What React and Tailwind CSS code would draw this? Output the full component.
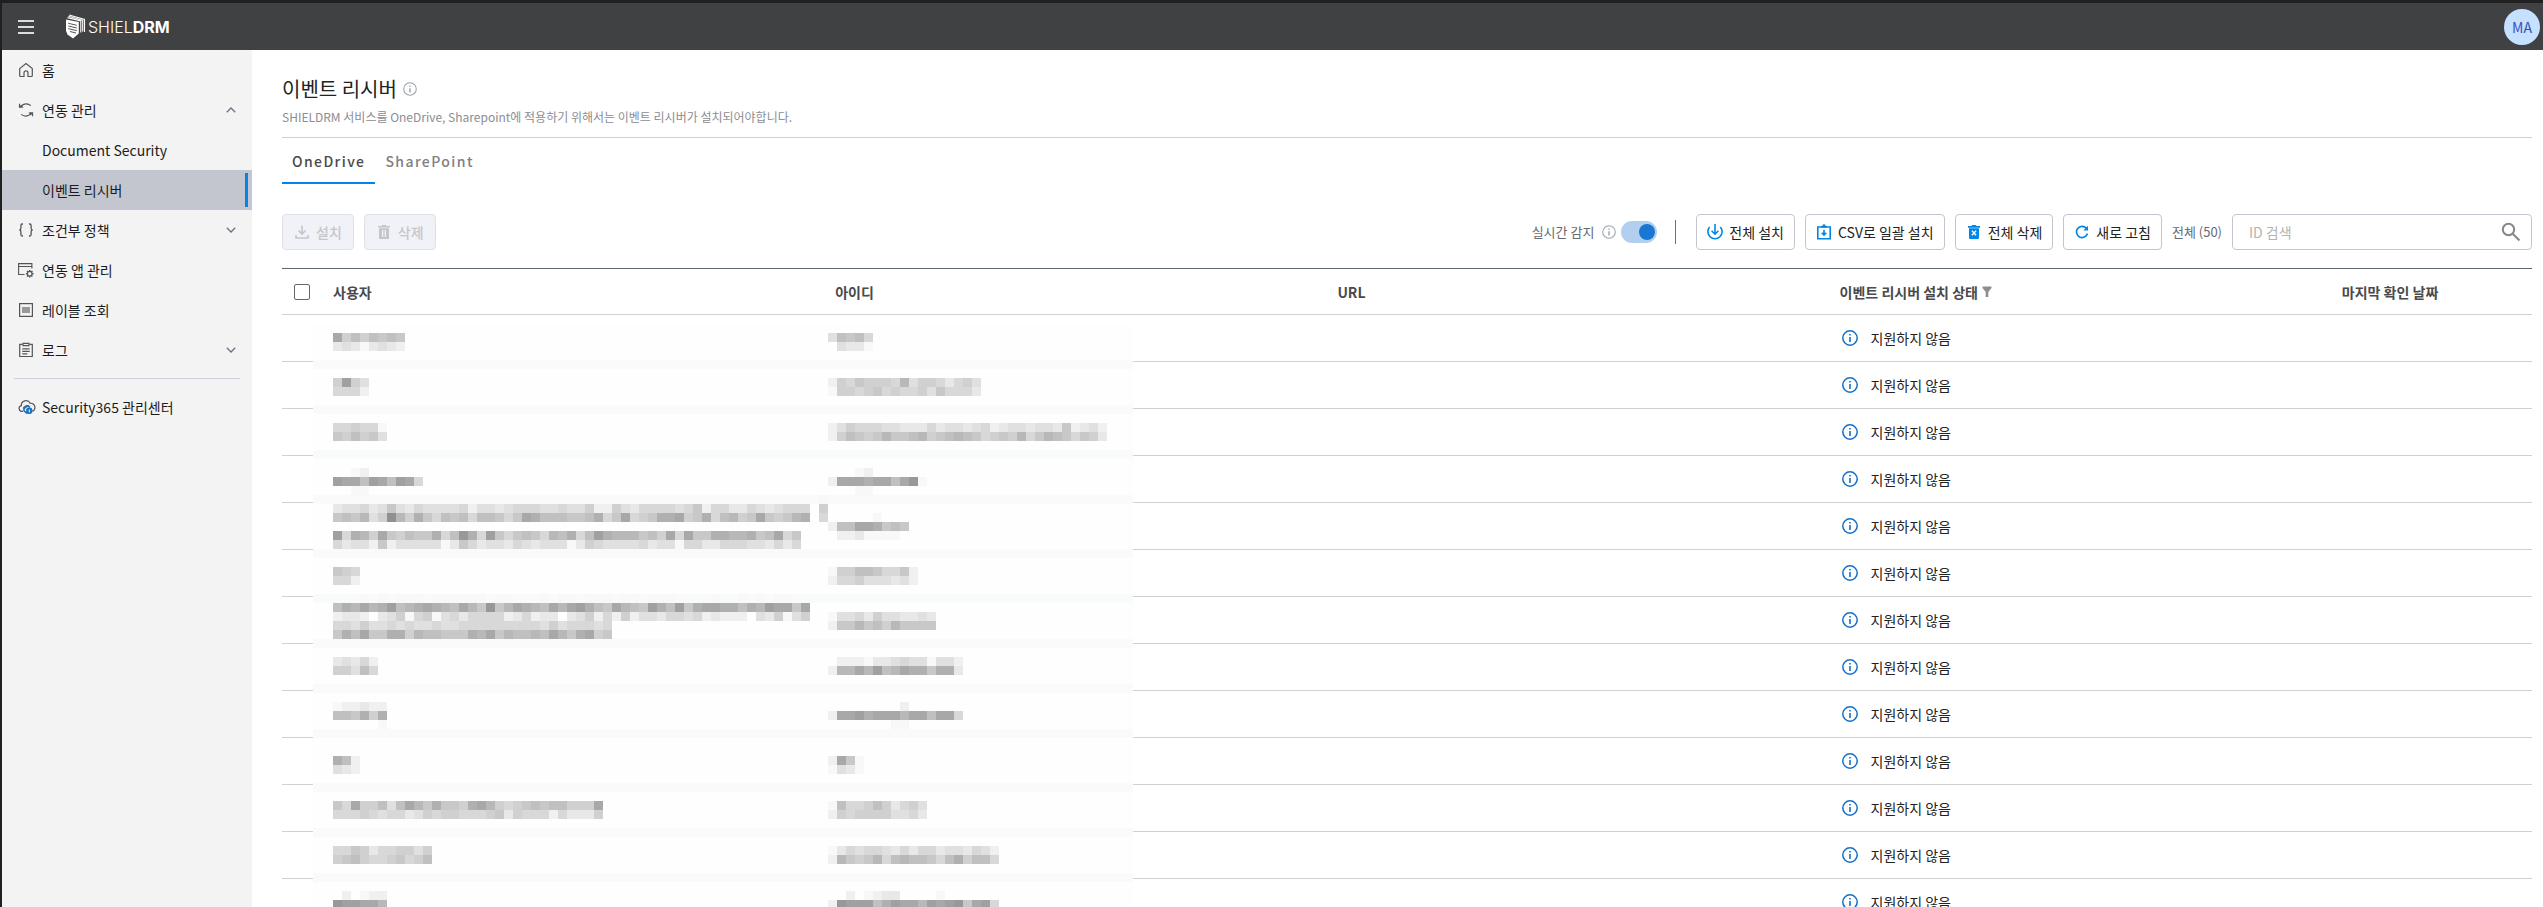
import React, { useState } from 'react';

const svgProps = { fill: 'none', stroke: 'currentColor', 'aria-hidden': true };

const HomeIcon = () => (
    <svg {...svgProps} width="16" height="16" viewBox="0 0 16 16" strokeWidth="1.2">
        <path d="M1.7 6.6 8 1.5l6.3 5.1v6.9a1 1 0 0 1-1 1H10v-3.6a2 2 0 0 0-4 0v3.6H2.7a1 1 0 0 1-1-1z" />
    </svg>
);

const SyncIcon = () => (
    <svg {...svgProps} width="16" height="16" viewBox="0 0 16 16" strokeWidth="1.2">
        <path d="M3 4.3A7 7 0 0 1 12.8 3.6M1.5 1.8v3.4h3.6M1.5 5.1l2.2-1.8" />
        <path d="M13 11.7a7 7 0 0 1-9.8.7M14.5 14.2v-3.4h-3.6M14.5 10.9l-2.2 1.8" />
    </svg>
);

const BracesIcon = () => (
    <svg {...svgProps} width="16" height="16" viewBox="0 0 16 16" strokeWidth="1.3">
        <path d="M5 2H4.2c-1 0-1.3.7-1.3 1.5v2.7c0 1-.5 1.8-1.6 1.8 1.1 0 1.6.8 1.6 1.8v2.7c0 .8.3 1.500 1.300 1.500H5" />
        <path d="M11 2h.8c1 0 1.300.7 1.300 1.500v2.700c0 1 .5 1.800 1.600 1.800-1.100 0-1.600.8-1.600 1.800v2.700c0 .8-.3 1.500-1.300 1.500H11" />
    </svg>
);

const AppSettingIcon = () => (
    <svg {...svgProps} width="16" height="16" viewBox="0 0 16 16" strokeWidth="1.1">
        <path d="M6.5 12.5H.6V1.6h13.3v5M.6 4.5h13.3" />
        <circle cx="11.7" cy="11.7" r="2.3" />
        <path strokeWidth="1.4" d="M11.7 7.900v1.500M11.700 14v1.500M7.900 11.700h1.500M14 11.700h1.500M9 9l1 1M13.400 13.400l1 1M9 14.400l1-1M13.400 10l1-1" />
    </svg>
);

const LabelIcon = () => (
    <svg {...svgProps} width="16" height="16" viewBox="0 0 16 16" strokeWidth="1.2">
        <rect x="1.6" y="1.6" width="12.8" height="12.8" />
        <rect x="4" y="5" width="8" height="6" fill="#999" stroke="none" />
    </svg>
);

const LogIcon = () => (
    <svg {...svgProps} width="16" height="16" viewBox="0 0 16 16" strokeWidth="1.2">
        <path d="M4.5 2.3H1.7v12.2h12.6V2.3h-2.800" />
        <path d="M5 1.3h6v2.400H5zM4.300 6.800h7.400M4.300 9.300h7.400M4.300 11.800h5" />
    </svg>
);

const CloudIcon = () => (
    <svg {...svgProps} width="18" height="16" viewBox="0 0 18 16" strokeWidth="1.2">
        <path d="M5 12.3H3.8A2.9 2.9 0 0 1 3.3 6.6 4.7 4.7 0 0 1 12.2 4.3 4.1 4.1 0 0 1 16.9 8.5c0 2-1 3.300-2.600 3.700" />
        <path d="M5.2 9.5A4.6 4.6 0 0 1 11 6.8" />
        <g stroke="#1673c4">
            <path d="M6.5 12.2a2 2 0 0 1 .4-3.200 3 3 0 0 1 5-.6" strokeWidth="1.6" />
            <circle cx="11.3" cy="11.7" r="2.6" fill="#1673c4" />
            <path d="M6.2 12.2 9.5 14.5" strokeWidth="1.6" />
        </g>
        <path d="M11.3 10.5v2.7" stroke="#fff" strokeWidth="1" />
    </svg>
);

const ChevronIcon = ({ up }) => (
    <svg {...svgProps} width="10" height="6" viewBox="0 0 10 6" strokeWidth="1.3" className="text-gray-500">
        <path d={up ? 'M.8 5.2 5 1l4.200 4.200' : 'M.8.8 5 5 9.200.8'} />
    </svg>
);

const InfoIcon = ({ size, stroke = 1.2, className }) => (
    <svg {...svgProps} width={size} height={size} viewBox="0 0 16 16" className={className}>
        <circle cx="8" cy="8" r="7.2" strokeWidth={stroke} />
        <path d="M8 7v5M8 4v1.5" strokeWidth="1.6" />
    </svg>
);

const DownloadIcon = () => (
    <svg {...svgProps} width="14" height="14" viewBox="0 0 14 14" strokeWidth="1.6">
        <path d="M7 .5v8M3.5 5.5 7 9l3.500-3.500M1 10v3h12v-3" />
    </svg>
);

const TrashIcon = () => (
    <svg width="12" height="14" viewBox="0 0 12 14" fill="currentColor" aria-hidden="true">
        <path d="M0 1h3.5l.8-1h3.400l.8 1H12v1.600H0z" />
        <path fillRule="evenodd" d="M1 3.200h10V14H1zM4 5v7h1.300V5zm2.700 0v7H8V5z" />
    </svg>
);

const InstallAllIcon = () => (
    <svg {...svgProps} width="16" height="16" viewBox="0 0 16 16" strokeWidth="1.6">
        <path d="M8 0v10M4.6 6.8 8 10.2l3.400-3.400" />
        <path d="M2.6 3A7.1 7.1 0 1 0 13.4 3" />
    </svg>
);

const CsvIcon = () => (
    <svg {...svgProps} width="16" height="16" viewBox="0 0 16 16" strokeWidth="1.6">
        <path d="M1.8 3h12.400v11.700H1.800z" />
        <path d="M5 2.7h6M6.500 1.200h3M8 5.800v5M5.700 8.700 8 11l2.300-2.300" />
    </svg>
);

const DeleteAllIcon = () => (
    <svg width="12" height="14" viewBox="0 0 12 14" fill="currentColor" aria-hidden="true">
        <path d="M0 1h3.500l.8-1h3.400l.8 1H12v1.700H0zM1 3.200h10V13a1 1 0 0 1-1 1H2a1 1 0 0 1-1-1z" />
        <path d="m3.900 5.700 4.200 4.600M8.100 5.700 3.900 10.300" stroke="#fff" strokeWidth="1.3" />
    </svg>
);

const RefreshIcon = () => (
    <svg {...svgProps} width="14" height="14" viewBox="0 0 14 14" strokeWidth="1.7">
        <path d="M12.5 8.5A5.6 5.6 0 1 1 11.3 3.2L12.5 4.5" />
        <path d="M13 .8v4.700H8.300z" fill="currentColor" stroke="none" />
    </svg>
);

const SearchIcon = () => (
    <svg {...svgProps} width="20" height="20" viewBox="0 0 20 20" strokeWidth="2" className="text-[#85878c]">
        <circle cx="7.5" cy="7.5" r="5.7" />
        <path d="m11.700 11.700 6.800 6.800" />
    </svg>
);

const FilterIcon = () => (
    <svg width="10" height="12" viewBox="0 0 10 12" fill="#8b8d93" aria-hidden="true">
        <path d="M.5.5h9v1.500L6.300 6v5H3.700V6L.5 2z" />
    </svg>
);

const LogoMark = () => (
    <svg width="20" height="25" viewBox="0 0 20 25" fill="none" stroke="#fff" aria-hidden="true">
        <path d="M0 5.5 12.8 8v11.500L7 24.500l-5.500-4L0 17z" fill="#fff" stroke="none" />
        <path d="M1.5 3.6 14.8 7v11.500M3.200 1 18.500 5.500V18M2.500 2.300 16.700 6.300V17.500" strokeWidth="1.1" />
        <path d="m2.300 9.300 8.500 2M2.300 12l8.500 2M2.300 14.600l8.500 2.100M4 17.500l6 1.500" stroke="#404143" strokeWidth=".9" />
    </svg>
);

const menus = [
    { label: '홈', icon: HomeIcon },
    { label: '연동 관리', icon: SyncIcon, arrow: 'up' },
    { label: 'Document Security' },
    { label: '이벤트 리시버', active: true },
    { label: '조건부 정책', icon: BracesIcon, arrow: 'down' },
    { label: '연동 앱 관리', icon: AppSettingIcon },
    { label: '레이블 조회', icon: LabelIcon },
    { label: '로그', icon: LogIcon, arrow: 'down' },
];

// Masked user data: [row, column, shades], a = lightest, n = darkest
const CELL = 9;
const maskCells = [
    [1, 1, 'kfhfhghg'], [2, 1, 'cdcacdcb'], [1, 56, 'dhghe'], [2, 56, '.dcca'],
    [6, 1, 'flfd'], [7, 1, 'eeeb'], [6, 56, 'bfegfffeidffecefd'], [7, 56, 'affefgefeefdgeeec'],
    [11, 1, 'eefeea'], [12, 1, 'gfhfgd'],
    [11, 56, 'bdfeeeddcccecddcdebcddcddcgbcdb'], [12, 56, 'bfhgfgigghifghihgefgfiegihgegfc'],
    [16, 3, 'ab'], [17, 1, 'lkkhlkhlke'], [18, 3, 'aa'],
    [16, 59, 'ab'], [17, 56, 'bkkkjkkhkma'], [18, 59, 'aa'],
    [20, 1, 'cddecdgdceddddebddcdeeeddeddfbbfdceeeedegbeeccedcdeee'],
    [21, 1, 'ghgidfnifjgehghehhgegkjhhhgghjegkefgjjkfgjehifgkgfgij'],
    [19, 55, 'a'], [20, 55, 'f'], [21, 55, 'e'],
    [23, 1, 'lejifkgfhggjehmjelgeghgeihjehljiiighfkekggjjiijghkeg'],
    [24, 1, 'ecddbgbdddddacgecddcedcdddacfeddddecddaeecceeeddcece'],
    [21, 61, 'a'], [22, 56, 'bhhkkjghg'], [23, 57, 'bbcaaaa'],
    [27, 1, 'gfe'], [28, 1, 'eeb'], [27, 56, 'affhhgeegb'], [28, 56, 'beefdddcdb'],
    [30, 4, 'a.a.aaa.aaaaaa.aa...a.aa.aaa.aa.aaa....a..a.a.aa'],
    [31, 1, 'hjikijlhijkjihkigmgikjihkikljhgkihgljhlgjkkjjhjilkkgk'],
    [32, 1, 'bccb.cdfaefadeceeeebcebcc.cdfbebfbddceedebcbbb.dcfadf'],
    [33, 1, 'eedfddededdeddeeeeeeeeedfdeeede'], [34, 1, 'gjhkggjjfihhgggjikgihhihkigjkfg'],
    [32, 56, 'addecfddccdc'], [33, 56, 'bggighfigggg'],
    [37, 1, 'cdceb'], [38, 1, 'ffdhe'], [37, 56, '.bbbaccdeddaddb'], [38, 56, 'biikilhikjjgjjc'],
    [42, 1, 'abbcbb'], [43, 1, 'hhgjfj'], [44, 6, 'a'],
    [42, 64, 'b'], [43, 56, 'bkkljkkkikkhkke'], [44, 63, 'aa'],
    [48, 1, 'jhb'], [49, 1, 'dcb'], [48, 56, 'bkga'], [49, 56, 'adca'],
    [53, 1, 'gekffhdhkigjggfjkifefghghhfffk'], [54, 1, 'eeefedeecdfeffeeefgcfeeebecccf'],
    [53, 56, 'aheefhfcefd'], [54, 56, 'bfeffffddec'],
    [58, 1, 'eegfceeffdf'], [59, 1, 'fghfeefgefh'],
    [58, 56, 'acedeedceceecddcedb'], [59, 56, 'bigfgiehihhgehjfhhe'],
    [63, 2, 'b.abb'], [64, 1, 'mllkki'], [63, 58, 'b.abcc....a'], [64, 56, 'bmlllhjlkkilklmgkle'],
];
const maskBands = [4, 9, 14, 19, 25, 30, 35, 40, 45, 51, 56, 61];

const shade = (ch) => {
    const v = 248 - (ch.charCodeAt(0) - 97) * 8;
    return `rgb(${v},${v},${v})`;
};

const DataMask = () => (
    <svg
        width="820"
        height="603"
        viewBox="-11 0 820 603"
        shapeRendering="crispEdges"
        className="absolute left-[31px] top-[55px]"
        aria-hidden="true"
    >
        <rect x="-11" width="820" height="603" fill="#fefefe" />
        {maskBands.map((row) => (
            <rect key={row} x="-11" y={row * CELL} width="820" height={CELL} fill="#f9fbfa" />
        ))}
        {maskCells.map(([row, col, shades]) =>
            shades.split('').map((ch, i) =>
                ch === '.' ? null : (
                    <rect
                        key={`${row}-${col + i}`}
                        x={(col + i) * CELL}
                        y={row * CELL}
                        width={CELL}
                        height={CELL}
                        fill={shade(ch)}
                    />
                )
            )
        )}
    </svg>
);

const ToolButton = ({ icon: Icon, children }) => (
    <button
        type="button"
        className="flex h-9 items-center gap-1.5 rounded border border-[#c3c4ce] bg-white px-[10px] text-[#222]"
    >
        <span className="flex w-4 justify-center text-[#0086e6]">
            <Icon />
        </span>
        {children}
    </button>
);

const DisabledButton = ({ icon: Icon, children }) => (
    <button
        type="button"
        disabled
        className="flex h-9 items-center gap-1.5 rounded border border-[#dfe0e6] bg-[#f1f2f7] px-[11px] font-medium text-[#c4c6cd]"
    >
        <span className="flex w-4 justify-center">
            <Icon />
        </span>
        {children}
    </button>
);

const Header = () => (
    <header className="flex h-[47px] shrink-0 items-center bg-[#404143] pl-4 pr-[3px]">
        <button type="button" aria-label="메뉴" className="flex w-4 flex-col gap-1">
            <span className="h-0.5 bg-[#dcdcdc]" />
            <span className="h-0.5 bg-[#dcdcdc]" />
            <span className="h-0.5 bg-[#dcdcdc]" />
        </button>
        <a href="#" className="ml-8 flex items-center gap-0.5 font-['Inter',sans-serif] text-base text-white">
            <LogoMark />
            <span>
                <span className="font-light">SHIEL</span>
                <span className="font-bold">DRM</span>
            </span>
        </a>
        <button
            type="button"
            className="ml-auto flex size-9 items-center justify-center rounded-full bg-[#c5e1ff] text-[#3a4db5]"
        >
            MA
        </button>
    </header>
);

const Sidebar = () => (
    <nav className="w-[250px] shrink-0 bg-[#f3f3f3] text-[#1c1c1c]">
        {menus.map(({ label, icon: Icon, arrow, active }) => (
            <a
                key={label}
                href="#"
                className={`flex h-10 items-center pl-4 ${active ? 'bg-[#c3c6ce] pr-1' : 'pr-4'}`}
            >
                <span className="flex w-6 text-[#555]">{Icon && <Icon />}</span>
                <span className="grow">{label}</span>
                {arrow && <ChevronIcon up={arrow === 'up'} />}
                {active && <span className="h-[34px] w-[3px] bg-[#0086e6]" />}
            </a>
        ))}
        <hr className="mx-3 mt-2 border-[#d0d1dc]" />
        <a href="#" className="mt-2 flex h-10 items-center pl-4">
            <span className="flex w-6 text-[#555]">
                <CloudIcon />
            </span>
            Security365 관리센터
        </a>
    </nav>
);

const Toolbar = ({ realtime, setRealtime }) => (
    <div className="mt-[30px] flex items-center gap-[10px]">
        <DisabledButton icon={DownloadIcon}>설치</DisabledButton>
        <DisabledButton icon={TrashIcon}>삭제</DisabledButton>

        <div className="ml-auto flex items-center text-[13px] text-[#666a73]">
            <label htmlFor="realtime">실시간 감지</label>
            <InfoIcon size={14} className="ml-2 mr-[5px] text-gray-400" />
            <span className="relative flex">
                <input
                    id="realtime"
                    type="checkbox"
                    role="switch"
                    checked={realtime}
                    onChange={(e) => setRealtime(e.target.checked)}
                    className="peer h-[22px] w-9 appearance-none rounded-full bg-gray-300 checked:bg-[#b2cff0]"
                />
                <span className="pointer-events-none absolute left-1 top-[3px] size-4 rounded-full bg-white peer-checked:left-[18px] peer-checked:bg-[#1976d2]" />
            </span>
        </div>
        <span className="ml-2 mr-[10px] h-6 w-px bg-gray-500" />

        <ToolButton icon={InstallAllIcon}>전체 설치</ToolButton>
        <ToolButton icon={CsvIcon}>CSV로 일괄 설치</ToolButton>
        <ToolButton icon={DeleteAllIcon}>전체 삭제</ToolButton>
        <ToolButton icon={RefreshIcon}>새로 고침</ToolButton>
        <span className="text-[13px] text-[#666a73]">전체 (50)</span>
        <form className="flex h-9 w-[300px] items-center rounded border border-[#c3c4ce] pl-4 pr-2.5">
            <input
                type="text"
                aria-label="ID 검색"
                placeholder="ID 검색"
                className="min-w-0 grow outline-none placeholder:text-[#b3b3b3]"
            />
            <button type="submit" aria-label="검색">
                <SearchIcon />
            </button>
        </form>
    </div>
);

const ReceiverTable = () => (
    <div className="relative mt-[18px] border-t border-[#5f6570]">
        <table className="w-full table-fixed border-separate border-spacing-0 text-left [&_td]:border-b [&_td]:border-[#d0d1d6] [&_th]:border-b [&_th]:border-[#d0d1d6]">
            <thead>
                <tr className="h-[46px] text-[#4a4a4a]">
                    <th className="w-[51px] pl-3">
                        <input
                            type="checkbox"
                            aria-label="전체 선택"
                            className="block size-4 appearance-none rounded-xs border border-[#666] bg-white"
                        />
                    </th>
                    <th className="w-[22.32%]">사용자</th>
                    <th className="w-[22.32%]">아이디</th>
                    <th className="w-[22.32%]">URL</th>
                    <th className="w-[22.32%]">
                        <span className="flex items-center gap-1">
                            이벤트 리시버 설치 상태
                            <FilterIcon />
                        </span>
                    </th>
                    <th>마지막 확인 날짜</th>
                </tr>
            </thead>
            <tbody>
                {Array.from({ length: 13 }, (_, i) => (
                    <tr key={i} className="h-[47px]">
                        <td />
                        <td />
                        <td />
                        <td />
                        <td>
                            <span className="flex items-center gap-[13px] pl-0.5 text-[#222]">
                                <InfoIcon size={16} stroke={1.5} className="text-[#1470c8]" />
                                지원하지 않음
                            </span>
                        </td>
                        <td />
                    </tr>
                ))}
            </tbody>
        </table>
        <DataMask />
    </div>
);

const App = () => {
    const [tab, setTab] = useState('OneDrive');
    const [realtime, setRealtime] = useState(true);

    return (
        <div className="flex h-screen flex-col overflow-hidden border-l-2 border-t-3 border-[#202020] bg-white font-['Noto_Sans_CJK_KR',sans-serif] text-sm">
            <Header />
            <div className="flex min-h-0 grow">
                <Sidebar />
                <main className="min-w-0 grow pl-[30px] pr-[11px] pt-6">
                    {/* Title */}
                    <div className="border-b border-[#d0d1d6] pb-[10px]">
                        <h1 className="flex items-center gap-1.5 text-xl/[30px] text-[#222]">
                            이벤트 리시버
                            <InfoIcon size={14} className="text-gray-400" />
                        </h1>
                        <p className="mt-[3px] text-xs/5 text-[#8b8d93]">
                            SHIELDRM 서비스를 OneDrive, Sharepoint에 적용하기 위해서는 이벤트 리시버가 설치되어야합니다.
                        </p>
                    </div>

                    {/* Tabs */}
                    <div role="tablist" className="flex">
                        {['OneDrive', 'SharePoint'].map((name) => (
                            <button
                                key={name}
                                type="button"
                                role="tab"
                                aria-selected={tab === name}
                                onClick={() => setTab(name)}
                                className={`border-b-2 px-[10px] pb-[11px] pt-[13px] font-medium tracking-widest ${
                                    tab === name ? 'border-[#0086e6] text-[#4a4a4a]' : 'border-transparent text-[#808080]'
                                }`}
                            >
                                {name}
                            </button>
                        ))}
                    </div>

                    <Toolbar realtime={realtime} setRealtime={setRealtime} />
                    <ReceiverTable />
                </main>
            </div>
        </div>
    );
};

export default App;
